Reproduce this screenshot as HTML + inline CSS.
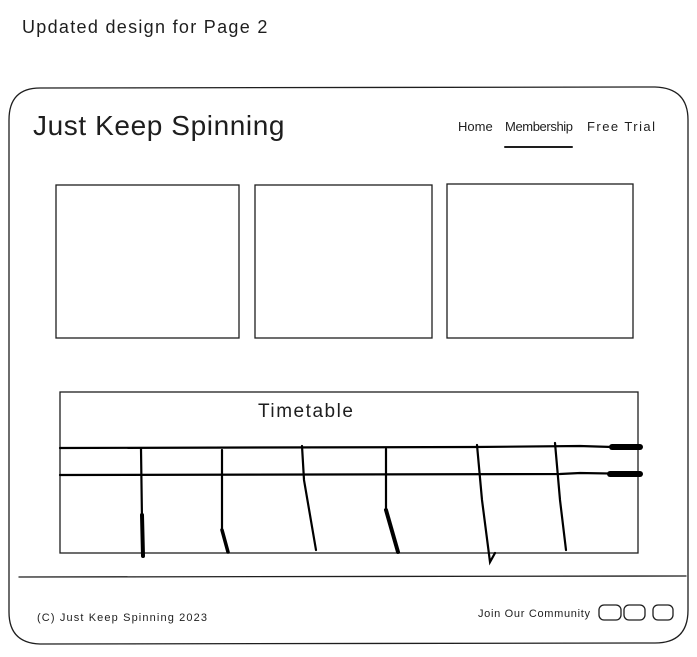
<!DOCTYPE html>
<html><head><style>
body{margin:0;background:#fff;width:697px;height:652px;overflow:hidden}
svg text{font-family:"Liberation Sans",sans-serif;fill:#1e1e1e}
</style></head><body>
<svg width="697" height="652" viewBox="0 0 697 652" xmlns="http://www.w3.org/2000/svg">
<text x="22" y="33" font-size="18" letter-spacing="1.3">Updated design for Page 2</text>
<g fill="none" stroke="#1e1e1e" stroke-width="1.3" stroke-linecap="round">
<path d="M40 88 L655 87 Q688 88 688 120 L688 610 Q688 643 655 643 L40 644 Q9 643 9 612 L9 120 Q9 88 40 88 Z"/>
<rect x="56" y="185" width="183" height="153"/>
<rect x="255" y="185" width="177" height="153"/>
<rect x="447" y="184" width="186" height="154"/>
<rect x="60" y="392" width="578" height="161"/>
<path d="M505 147 L572 147" stroke-width="2"/>
<path d="M19 577 L686 576"/>
<rect x="599" y="605" width="22" height="15" rx="5"/>
<rect x="624" y="605" width="21" height="15" rx="5"/>
<rect x="653" y="605" width="20" height="15" rx="5"/>
</g>
<g fill="none" stroke="#000" stroke-width="2.2" stroke-linecap="round">
<path d="M60 448 L475 447 L580 446 L612 447 L640 447"/>
<path d="M640 447 L612 447" stroke-width="6"/>
<path d="M60 475 L560 474 L580 473 L640 474"/>
<path d="M640 474 L610 474" stroke-width="6"/>
<path d="M141 449 L142 520 L143 556"/>
<path d="M142 515 L143 556" stroke-width="4"/>
<path d="M222 450 L222 530 L228 552"/>
<path d="M222 530 L228 552" stroke-width="3.5"/>
<path d="M302 446 L304 480 L316 550"/>
<path d="M386 449 L386 510 L398 552"/>
<path d="M386 510 L398 552" stroke-width="4"/>
<path d="M477 445 L482 500 L490 562 L495 553"/>
<path d="M555 443 L560 500 L566 550"/>
</g>
<text x="33" y="135" font-size="28" letter-spacing="0.6">Just Keep Spinning</text>
<text x="458" y="131" font-size="13">Home</text>
<text x="505" y="131" font-size="13" textLength="68">Membership</text>
<text x="587" y="131" font-size="13" textLength="68">Free Trial</text>
<text x="258" y="417" font-size="19" textLength="95">Timetable</text>
<text x="37" y="621" font-size="11" textLength="170">(C) Just Keep Spinning 2023</text>
<text x="478" y="617" font-size="11" textLength="112">Join Our Community</text>
</svg>
</body></html>
